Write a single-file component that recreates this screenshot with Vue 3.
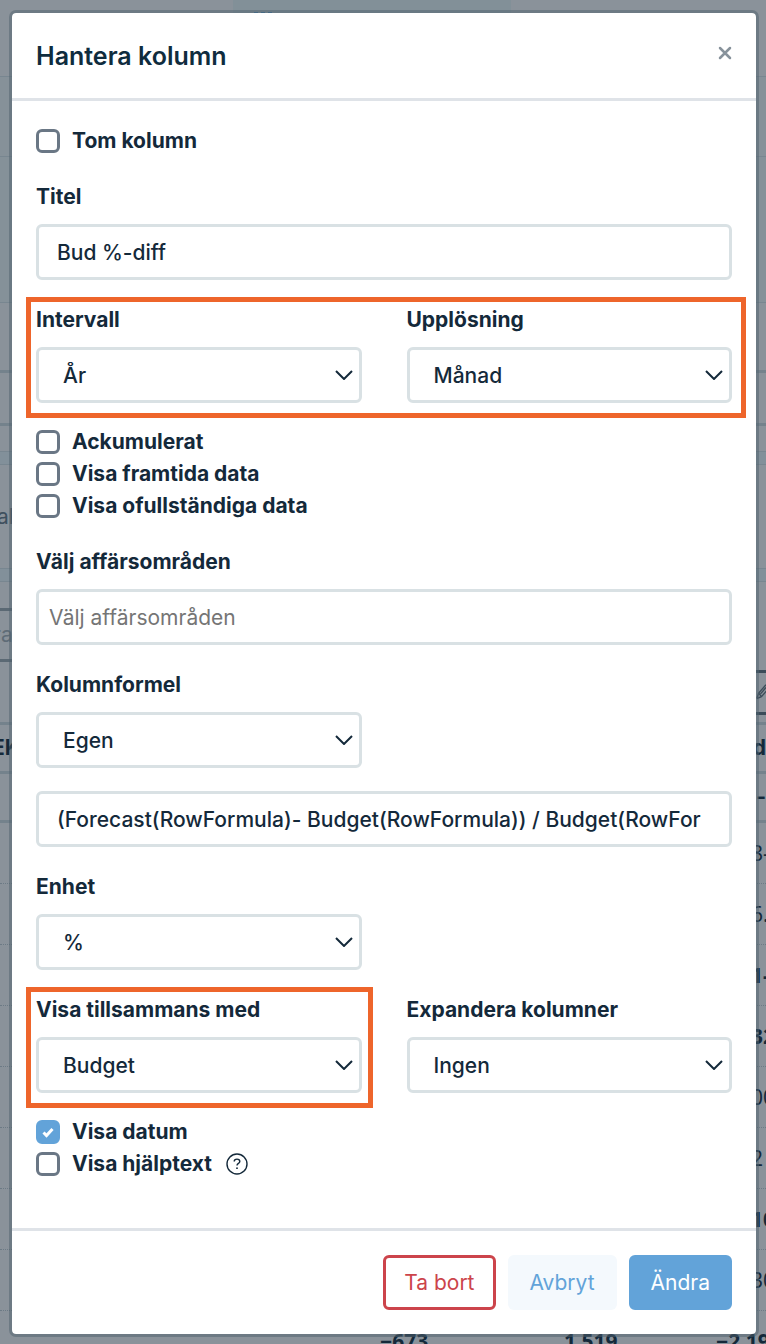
<script setup>
import { reactive } from 'vue'

const form = reactive({
  empty: false,
  title: 'Bud %-diff',
  interval: 'År',
  resolution: 'Månad',
  accumulated: false,
  future: false,
  incomplete: false,
  areas: '',
  formulaType: 'Egen',
  formula: '(Forecast(RowFormula)- Budget(RowFormula)) / Budget(RowFor',
  unit: '%',
  showWith: 'Budget',
  expand: 'Ingen',
  showDate: true,
  showHelp: false,
})

const dataChecks = [
  { key: 'accumulated', label: 'Ackumulerat' },
  { key: 'future', label: 'Visa framtida data' },
  { key: 'incomplete', label: 'Visa ofullständiga data' },
]

const cells = [
  { text: '8-' },
  { text: '6.' },
  { text: '1-', bold: true },
  { text: '32', bold: true },
  { text: '00' },
  { text: '2' },
  { text: '10', bold: true },
  { text: '30' },
]
</script>

<template>
  <div class="screen">
    <div class="page" aria-hidden="true">
      <div class="band tabs"><span class="tab"><i></i><i></i><i></i></span></div>
      <div class="band toolbar"></div>
      <div class="band intro"></div>
      <div class="band summary"></div>
      <div class="band strip"></div>
      <div class="band thin"></div>
      <div class="band gutter"></div>
      <div class="band caption"><span>al</span></div>
      <div class="band gutter"></div>
      <div class="band search">
        <span class="search-box">ra</span>
        <span class="edit-box">
          <svg width="12" height="18" viewBox="0 0 12 18" fill="none" stroke="#3b4c59" stroke-width="1.5">
            <path d="M2 15 L4 9 L12 0 M2 15 L7 13 L14 5 M4 9 L7 13 M6 10 L12 3" />
          </svg>
        </span>
      </div>
      <div class="band table-head"><b>EK</b><b>d</b></div>
      <div class="band table-head"><b></b><b>:-</b></div>
      <div v-for="(c, i) in cells" :key="i" class="band cell" :class="{ bold: c.bold }">
        <span>{{ c.text }}</span>
      </div>
      <div class="totals"><b>−673</b><b>1 519</b><b>−2 19</b></div>
    </div>

    <section class="modal" role="dialog" aria-labelledby="dialog-title">
      <header class="head">
        <h1 id="dialog-title">Hantera kolumn</h1>
        <button class="close" type="button" aria-label="Stäng">
          <svg width="14" height="14" viewBox="0 0 14 14" fill="none" stroke="#87929b" stroke-width="2.5" stroke-linecap="round">
            <path d="M2 2 L12 12 M12 2 L2 12" />
          </svg>
        </button>
      </header>

      <form class="body" @submit.prevent>
        <label class="check">
          <input v-model="form.empty" type="checkbox" />
          <span>Tom kolumn</span>
        </label>

        <div class="field">
          <label for="title">Titel</label>
          <input id="title" v-model="form.title" class="box" type="text" />
        </div>

        <div class="pair marked">
          <div class="field">
            <label for="interval">Intervall</label>
            <div class="pick">
              <select id="interval" v-model="form.interval" class="box"><option>År</option></select>
              <svg viewBox="0 0 18 10"><path d="M1 1 L9 9 L17 1" /></svg>
            </div>
          </div>
          <div class="field">
            <label for="resolution">Upplösning</label>
            <div class="pick">
              <select id="resolution" v-model="form.resolution" class="box"><option>Månad</option></select>
              <svg viewBox="0 0 18 10"><path d="M1 1 L9 9 L17 1" /></svg>
            </div>
          </div>
        </div>

        <div class="checks">
          <label v-for="c in dataChecks" :key="c.key" class="check">
            <input v-model="form[c.key]" type="checkbox" />
            <span>{{ c.label }}</span>
          </label>
        </div>

        <div class="field">
          <label for="areas">Välj affärsområden</label>
          <input id="areas" v-model="form.areas" class="box tags" type="text" placeholder="Välj affärsområden" />
        </div>

        <div class="pair">
          <div class="field">
            <label for="formula-type">Kolumnformel</label>
            <div class="pick">
              <select id="formula-type" v-model="form.formulaType" class="box"><option>Egen</option></select>
              <svg viewBox="0 0 18 10"><path d="M1 1 L9 9 L17 1" /></svg>
            </div>
          </div>
        </div>
        <input v-model="form.formula" class="box formula" type="text" aria-label="Formel" />

        <div class="pair">
          <div class="field">
            <label for="unit">Enhet</label>
            <div class="pick">
              <select id="unit" v-model="form.unit" class="box"><option>%</option></select>
              <svg viewBox="0 0 18 10"><path d="M1 1 L9 9 L17 1" /></svg>
            </div>
          </div>
        </div>

        <div class="pair">
          <div class="field marked">
            <label for="show-with">Visa tillsammans med</label>
            <div class="pick">
              <select id="show-with" v-model="form.showWith" class="box"><option>Budget</option></select>
              <svg viewBox="0 0 18 10"><path d="M1 1 L9 9 L17 1" /></svg>
            </div>
          </div>
          <div class="field">
            <label for="expand">Expandera kolumner</label>
            <div class="pick">
              <select id="expand" v-model="form.expand" class="box"><option>Ingen</option></select>
              <svg viewBox="0 0 18 10"><path d="M1 1 L9 9 L17 1" /></svg>
            </div>
          </div>
        </div>

        <div class="checks">
          <label class="check">
            <input v-model="form.showDate" type="checkbox" />
            <svg v-if="form.showDate" class="tick" viewBox="0 0 24 24"><path d="M7.5 12.5 L10.5 15.5 L16.5 9" /></svg>
            <span>Visa datum</span>
          </label>
          <div class="help-row">
            <label class="check">
              <input v-model="form.showHelp" type="checkbox" />
              <span>Visa hjälptext</span>
            </label>
            <svg class="help" width="22" height="22" viewBox="0 0 22 22" fill="none" stroke="#14293a" role="img" aria-label="Hjälp">
              <circle cx="11" cy="11" r="10" stroke-width="1.4" />
              <path d="M8.2 8.4 C8.2 5.4 13.8 5.4 13.8 8.4 C13.8 10.4 11 10.4 11 12.6" stroke-width="1.4" />
              <circle cx="11" cy="15.2" r="0.9" fill="#14293a" stroke="none" />
            </svg>
          </div>
        </div>
      </form>

      <footer class="foot">
        <button class="btn danger" type="button">Ta bort</button>
        <button class="btn light" type="button">Avbryt</button>
        <button class="btn primary" type="button">Ändra</button>
      </footer>
    </section>
  </div>
</template>

<style>
body {
  margin: 0;
}
</style>

<style scoped>
* {
  box-sizing: border-box;
}
.screen {
  position: relative;
  overflow: hidden;
  padding: 10px 7px 7px 9px;
  background: #8a929a;
  color: #14293a;
  font-family: Inter, "Noto Sans", sans-serif;
  font-size: 21px;
  line-height: 28px;
}

/* Dimmed page behind the dialog */
.page {
  position: absolute;
  inset: 0;
  overflow: hidden;
}
.band {
  display: flex;
  justify-content: space-between;
  height: 61px;
  border-bottom: 1px solid #788690;
}
.tabs {
  justify-content: flex-start;
  height: 77px;
}
.tab {
  display: flex;
  gap: 3px;
  width: 278px;
  margin-left: 233px;
  padding: 12px 21px;
  background: #829098;
}
.tab i {
  width: 4px;
  height: 2px;
  background: #3c7099;
}
.toolbar {
  height: 80px;
  background: #869199;
}
.intro {
  height: 146px;
  background: #859199;
}
.summary {
  height: 70px;
  border-bottom: 3px solid #74828c;
}
.strip {
  height: 53px;
  border-bottom: 3px solid #74828c;
}
.thin {
  height: 26px;
}
.gutter {
  height: 13px;
  background: #82909a;
}
.caption {
  height: 104px;
  align-items: center;
  color: #3f505e;
}
.caption span {
  margin-left: -3px;
}
.search {
  height: 143px;
  align-items: flex-start;
  padding-top: 26px;
  border-bottom: 3px solid #74828c;
}
.search-box {
  display: flex;
  align-items: center;
  width: 20px;
  height: 54px;
  border: solid #5b6974;
  border-width: 3px 0;
  color: #5f6c77;
  text-indent: -7px;
}
.edit-box {
  display: flex;
  align-items: center;
  width: 11px;
  height: 45px;
  margin-top: 62px;
  border: solid #3b4c59;
  border-width: 3px 0;
}
.table-head {
  height: 49px;
  align-items: center;
  border-bottom: 3px solid #74828c;
}
.table-head b:first-child {
  margin-left: -8px;
}
.cell {
  justify-content: flex-end;
  align-items: center;
  border-bottom: 1px dotted #6c7a85;
}
.cell span {
  width: 15px;
  font-family: "Noto Sans", sans-serif;
}
.bold {
  font-weight: 700;
}
.totals {
  display: grid;
  grid-template-columns: 184px 152px 1fr;
  padding: 16px 0 0 380px;
  font-family: "Noto Sans", sans-serif;
  white-space: nowrap;
}

/* Dialog */
.modal {
  position: relative;
  border: 3px solid rgba(80, 98, 110, 0.5);
  border-radius: 7px;
  background: #fff;
  background-clip: padding-box;
}
.head {
  display: flex;
  align-items: flex-start;
  justify-content: space-between;
  padding: 27px 24px 26px;
  border-bottom: 3px solid #dfe3e8;
}
h1 {
  margin: 0;
  font-size: 25px;
  font-weight: 600;
  line-height: 32px;
  color: #0f2c3e;
}
button {
  font: inherit;
  cursor: pointer;
}
.close {
  display: flex;
  padding: 6px 0;
  border: 0;
  background: none;
}
.body {
  display: flex;
  flex-direction: column;
  padding: 24px 24px 48px;
}
.pair {
  position: relative;
  display: grid;
  grid-template-columns: 1fr 1fr;
  gap: 45px;
  margin-top: 26px;
}
.field {
  position: relative;
  display: flex;
  flex-direction: column;
  gap: 13px;
  margin-top: 26px;
}
.pair .field {
  margin-top: 0;
}
.field label {
  font-weight: 700;
}
.marked::after {
  content: "";
  position: absolute;
  inset: -9px -11px -15px -10px;
  border: 5px solid #ee652b;
  pointer-events: none;
}
.pair.marked::after {
  right: -14px;
}
.box {
  width: 100%;
  height: 56px;
  padding: 0 18px;
  border: 3px solid #d9e1e4;
  border-radius: 6px;
  background: #fff;
  color: inherit;
  font: inherit;
  font-weight: 500;
  appearance: none;
}
.tags {
  padding: 0 10px;
  font-weight: 400;
}
.tags::placeholder {
  color: #757575;
}
.formula {
  margin-top: 23px;
}
.pick {
  position: relative;
}
.pick .box {
  display: block;
  padding: 2px 24px 0;
}
.pick svg {
  position: absolute;
  top: 23px;
  right: 9px;
  width: 18px;
  height: 10px;
  fill: none;
  stroke: #14293a;
  stroke-width: 2;
  pointer-events: none;
}
.checks {
  margin-top: 23px;
}
.check {
  position: relative;
  display: flex;
  align-items: center;
  gap: 12px;
  height: 32px;
  font-weight: 700;
}
.check input {
  width: 24px;
  height: 24px;
  margin: 0;
  border: 3px solid #6a7785;
  border-radius: 6px;
  background: #fff;
  appearance: none;
}
.check input:checked {
  border-color: #62a3d9;
  background: #62a3d9;
}
.tick {
  position: absolute;
  left: 0;
  width: 24px;
  height: 24px;
  fill: none;
  stroke: #fff;
  stroke-width: 3;
  pointer-events: none;
}
.help-row {
  display: flex;
  align-items: center;
  gap: 14px;
}
.foot {
  display: flex;
  justify-content: flex-end;
  gap: 12px;
  padding: 24px;
  border-top: 3px solid #dfe3e8;
}
.btn {
  height: 55px;
  padding: 0 19px;
  border: 3px solid transparent;
  border-radius: 6px;
}
.danger {
  padding: 0 18px;
  border-color: #cc444b;
  background: #fff;
  color: #cc444b;
}
.light {
  background: #f4f9fd;
  color: #62a3d9;
}
.primary {
  border-color: #62a3d9;
  background: #62a3d9;
  color: #fff;
}
</style>
